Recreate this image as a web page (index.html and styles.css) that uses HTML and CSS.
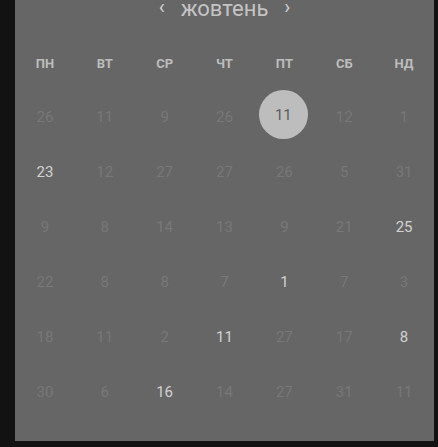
FILE: index.html
```html
<!DOCTYPE html>
<html lang="uk">
<head>
<meta charset="utf-8">
<link rel="stylesheet" href="styles.css">
</head>
<body>
<div class="panel">
  <div class="header">
    <span class="arrow">‹</span>
    <span class="month">жовтень</span>
    <span class="arrow">›</span>
  </div>
  <div class="weekdays">
    <div>ПН</div><div>ВТ</div><div>СР</div><div>ЧТ</div><div>ПТ</div><div>СБ</div><div>НД</div>
  </div>
  <div class="days">
    <div class="d">26</div><div class="d">11</div><div class="d">9</div><div class="d">26</div><div class="d sel"><span>11</span></div><div class="d">12</div><div class="d">1</div>
    <div class="d on">23</div><div class="d">12</div><div class="d">27</div><div class="d">27</div><div class="d">26</div><div class="d">5</div><div class="d">31</div>
    <div class="d">9</div><div class="d">8</div><div class="d">14</div><div class="d">13</div><div class="d">9</div><div class="d">21</div><div class="d on">25</div>
    <div class="d">22</div><div class="d">8</div><div class="d">8</div><div class="d">7</div><div class="d on">1</div><div class="d">7</div><div class="d">3</div>
    <div class="d">18</div><div class="d">11</div><div class="d">2</div><div class="d on">11</div><div class="d">27</div><div class="d">17</div><div class="d on">8</div>
    <div class="d">30</div><div class="d">6</div><div class="d on">16</div><div class="d">14</div><div class="d">27</div><div class="d">31</div><div class="d">11</div>
  </div>
</div>
</body>
</html>
```
FILE: styles.css
```css
html, body {
  margin: 0;
  padding: 0;
  background: #121212;
  height: 447px;
  overflow: hidden;
}
body {
  font-family: Roboto, "Liberation Sans", sans-serif;
}
.panel {
  margin-left: 15px;
  width: 419px;
  height: 441px;
  background: #666666;
  display: flex;
  flex-direction: column;
}
.header {
  height: 16px;
  padding-top: 1px;
  display: flex;
  justify-content: center;
  align-items: flex-start;
  gap: 16px;
  color: #c4c4c4;
}
.month {
  font-size: 22px;
  font-weight: 400;
  line-height: 16px;
}
.arrow {
  font-size: 20px;
  line-height: 13px;
  color: #d0d0d0;
}
.weekdays {
  display: grid;
  grid-template-columns: repeat(7, 1fr);
  margin-top: 37px;
  height: 18px;
  align-items: center;
  color: #bdbdbd;
  font-size: 13px;
  font-weight: 700;
  text-align: center;
}
.days {
  display: grid;
  grid-template-columns: repeat(7, 1fr);
  grid-auto-rows: 55px;
  margin-top: 17px;
}
.d {
  display: flex;
  align-items: center;
  justify-content: center;
  font-size: 15px;
  color: #787878;
}
.d.on {
  color: #d2d2d2;
}
.d.sel span {
  width: 49px;
  height: 49px;
  border-radius: 50%;
  background: #bdbdbd;
  color: #5c5c5c;
  display: flex;
  align-items: center;
  justify-content: center;
  margin-top: -4px;
  margin-left: -2px;
}
```
